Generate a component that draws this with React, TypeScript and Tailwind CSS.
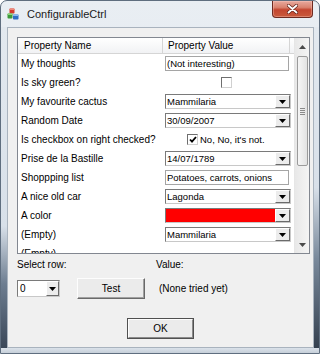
import React from "react";

function Arrow({ color = "#000" }: { color?: string }) {
  return (
    <svg width="7" height="4" viewBox="0 0 7 4">
      <path d="M0 0h7L3.5 4z" fill={color} />
    </svg>
  );
}

function UpArrow() {
  return (
    <svg width="7" height="4" viewBox="0 0 7 4">
      <path d="M0 4h7L3.5 0z" fill="#4a4a4a" />
    </svg>
  );
}

function DropBtn() {
  return (
    <div className="flex w-[15px] items-center justify-center border border-t-[#ffffff] border-l-[#ffffff] border-r-[#6b6b6b] border-b-[#6b6b6b] bg-[#ececec]">
      <Arrow />
    </div>
  );
}

function Combo({ text, red }: { text?: string; red?: boolean }) {
  return (
    <div className="ml-[2px] flex h-[15px] w-[126px] border border-t-[#7a7a7a] border-l-[#7a7a7a] border-r-[#c8c8c8] border-b-[#c8c8c8] bg-white">
      <div
        className={
          red
            ? "flex-1 bg-[#ff0000]"
            : "flex-1 pl-[1px] text-[9.5px] leading-[13px] whitespace-nowrap"
        }
      >
        {text}
      </div>
      <DropBtn />
    </div>
  );
}

function Edit({ text }: { text: string }) {
  return (
    <div className="ml-[2px] h-[15px] w-[124px] border border-[#a5a5a5] bg-white pl-[1px] text-[9.5px] leading-[13px] whitespace-nowrap">
      {text}
    </div>
  );
}

function Check({ checked }: { checked?: boolean }) {
  return (
    <div className="flex h-[11px] w-[11px] items-center justify-center border border-t-[#6e6e6e] border-l-[#6e6e6e] border-r-[#d0d0d0] border-b-[#d0d0d0] bg-white">
      {checked && (
        <svg width="8" height="8" viewBox="0 0 8 8">
          <path d="M1 3.5l2 2.2L7 1" stroke="#000" strokeWidth="1.8" fill="none" />
        </svg>
      )}
    </div>
  );
}

function Row({ name, children }: { name: string; children?: React.ReactNode }) {
  return (
    <div className="flex h-[19px] shrink-0 items-center">
      <div className="w-[145px] shrink-0 pl-[3px] text-[10px] leading-[12px] whitespace-nowrap">
        {name}
      </div>
      <div className="flex flex-1 items-center">{children}</div>
    </div>
  );
}

function AppIcon() {
  return (
    <svg width="12" height="12" viewBox="0 0 12 12">
      <rect x="2.5" y="0.5" width="5" height="5" rx="0.8" fill="#d33a2c" />
      <rect x="2.5" y="0.5" width="5" height="1.6" rx="0.6" fill="#f08a7c" />
      <rect x="0.5" y="5.5" width="5" height="5" rx="0.8" fill="#3c9a3a" />
      <rect x="0.5" y="5.5" width="5" height="1.6" rx="0.6" fill="#8fd47c" />
      <rect x="6" y="6.5" width="5.5" height="5" rx="0.8" fill="#2f6fc4" />
      <rect x="6" y="6.5" width="5.5" height="1.6" rx="0.6" fill="#8bb8ee" />
    </svg>
  );
}

export default function App() {
  return (
    <div className="h-[354px] w-[320px] overflow-hidden bg-white font-['Liberation_Sans',Arial,sans-serif] text-black">
      <div className="flex h-[354px] w-[320px] flex-col rounded-t-[7px] border border-[#5f6e7f] bg-[linear-gradient(to_bottom,#e9eef3,#d9e1ea)]">
        {/* title bar */}
        <div className="flex h-[26px] shrink-0 items-center">
          <div className="ml-[6px] flex h-[12px] w-[12px]">
            <AppIcon />
          </div>
          <div className="ml-[8px] text-[11px] leading-[14px] text-[#1b1b1b]">ConfigurableCtrl</div>
          <div className="flex-1" />
          <div className="mr-[6px] flex h-[17px] w-[41px] items-center justify-center self-start rounded-b-[4px] border border-t-0 border-[#6e2a20] bg-[linear-gradient(to_bottom,#e8aa9e_0%,#d9826f_40%,#c3452f_55%,#c95a3c_100%)] shadow-[inset_0_0_0_1px_rgba(255,210,200,0.35)]">
            <svg width="11" height="10" viewBox="0 0 11 10">
              <path d="M1.5 1.5l8 7M9.5 1.5l-8 7" stroke="#5a1a12" strokeWidth="3.2" strokeLinecap="round" />
              <path d="M1.5 1.5l8 7M9.5 1.5l-8 7" stroke="#ffffff" strokeWidth="1.9" strokeLinecap="round" />
            </svg>
          </div>
        </div>

        {/* middle */}
        <div className="flex h-[321px] shrink-0">
          <div className="w-[6px] bg-[linear-gradient(to_bottom,#e3e9ef_0%,#d8e0e9_62%,#6d7d90_80%,#3a4758_100%)]" />
          <div className="flex w-[307px] flex-col border border-[#a9b3be] bg-[#f0f0f0] pl-[9px] pt-[9px]">
            {/* list */}
            <div className="flex h-[217px] w-[293px] shrink-0 border border-[#828790] bg-white">
              <div className="flex w-[276px] flex-col overflow-hidden">
                <div className="flex h-[16px] shrink-0 border-b border-[#d5d5d5] bg-[linear-gradient(to_bottom,#ffffff,#f1f2f4)] text-[10px] leading-[15px]">
                  <div className="w-[145px] border-r border-[#d5d5d5] pl-[6px]">Property Name</div>
                  <div className="w-[127px] border-r border-[#d5d5d5] pl-[5px]">Property Value</div>
                </div>
                <Row name="My thoughts">
                  <Edit text="(Not interesting)" />
                </Row>
                <Row name="Is sky green?">
                  <div className="ml-[58px]">
                    <Check />
                  </div>
                </Row>
                <Row name="My favourite cactus">
                  <Combo text="Mammilaria" />
                </Row>
                <Row name="Random Date">
                  <Combo text="30/09/2007" />
                </Row>
                <Row name="Is checkbox on right checked?">
                  <div className="ml-[24px] flex items-center">
                    <Check checked />
                    <span className="ml-[2px] text-[9.5px] leading-[12px] whitespace-nowrap">No, No, it's not.</span>
                  </div>
                </Row>
                <Row name="Prise de la Bastille">
                  <Combo text="14/07/1789" />
                </Row>
                <Row name="Shoppping list">
                  <Edit text="Potatoes, carrots, onions" />
                </Row>
                <Row name="A nice old car">
                  <Combo text="Lagonda" />
                </Row>
                <Row name="A color">
                  <Combo red />
                </Row>
                <Row name="(Empty)">
                  <Combo text="Mammilaria" />
                </Row>
                <Row name="(Empty)" />
              </div>
              {/* scrollbar */}
              <div className="flex w-[15px] flex-col border-l border-[#e6e6e6] bg-[linear-gradient(to_right,#e8e8e8,#f4f4f4)]">
                <div className="flex h-[17px] shrink-0 items-center justify-center">
                  <UpArrow />
                </div>
                <div className="flex flex-1 flex-col items-center">
                  <div className="mt-[1px] flex h-[110px] w-[11px] items-center justify-center rounded-[2px] border border-[#9b9b9b] bg-[linear-gradient(to_right,#f6f6f6,#e2e2e2)]">
                    <div className="flex flex-col gap-[1px]">
                      <div className="h-[1px] w-[5px] bg-[#8a8a8a]" />
                      <div className="h-[1px] w-[5px] bg-[#8a8a8a]" />
                      <div className="h-[1px] w-[5px] bg-[#8a8a8a]" />
                      <div className="h-[1px] w-[5px] bg-[#8a8a8a]" />
                    </div>
                  </div>
                </div>
                <div className="flex h-[17px] shrink-0 items-center justify-center">
                  <Arrow color="#4a4a4a" />
                </div>
              </div>
            </div>

            {/* labels */}
            <div className="mt-[5px] flex h-[12px] shrink-0 text-[10px] leading-[12px]">
              <div className="w-[139px]">Select row:</div>
              <div>Value:</div>
            </div>

            {/* controls */}
            <div className="mt-[7px] flex h-[21px] shrink-0 items-center">
              <div className="flex h-[17px] w-[43px] border border-t-[#7a7a7a] border-l-[#7a7a7a] border-r-[#c8c8c8] border-b-[#c8c8c8] bg-white">
                <div className="flex-1 pl-[2px] text-[10px] leading-[15px]">0</div>
                <div className="flex w-[13px] items-center justify-center border border-t-[#ffffff] border-l-[#ffffff] border-r-[#6b6b6b] border-b-[#6b6b6b] bg-[#ececec]">
                  <Arrow />
                </div>
              </div>
              <div className="ml-[17px] flex h-[21px] w-[68px] items-center justify-center border border-t-[#fdfdfd] border-l-[#fdfdfd] border-r-[#696969] border-b-[#696969] bg-[#ebebeb] text-[10px] shadow-[inset_-1px_-1px_0_#a0a0a0]">
                Test
              </div>
              <div className="ml-[14px] text-[10px] leading-[12px]">(None tried yet)</div>
            </div>

            {/* OK */}
            <div className="mt-[19px] flex shrink-0 justify-center pr-[9px]">
              <div className="flex h-[21px] w-[67px] border border-[#505050]">
                <div className="flex flex-1 items-center justify-center border border-t-[#fdfdfd] border-l-[#fdfdfd] border-r-[#8a8a8a] border-b-[#8a8a8a] bg-[#ebebeb] text-[10px]">
                  OK
                </div>
              </div>
            </div>
          </div>
          <div className="w-[5px] bg-[linear-gradient(to_bottom,#e3e9ef_0%,#d8e0e9_50%,#7a8a9c_72%,#34404f_100%)]" />
        </div>
        <div className="h-[5px] shrink-0 bg-[linear-gradient(to_bottom,#dbe2ea,#c6cfd9)]" />
      </div>
    </div>
  );
}
